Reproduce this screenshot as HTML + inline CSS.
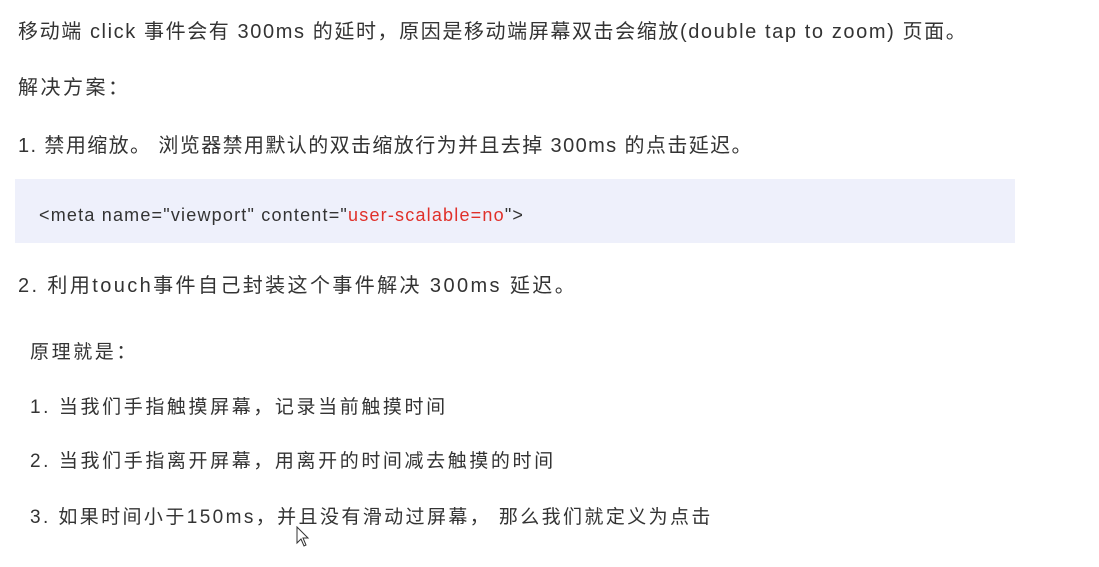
<!DOCTYPE html>
<html><head><meta charset="utf-8"><style>
html,body{margin:0;padding:0;background:#fff;width:1099px;height:567px;overflow:hidden}
body{font-family:"Liberation Sans","Noto Sans CJK SC",sans-serif;color:#333;}
.l{position:absolute;white-space:nowrap;font-size:20px;line-height:24px}
.s{font-size:19px;letter-spacing:2.6px}
.code{position:absolute;left:15px;top:179px;width:1000px;height:64px;background:#eef0fb}
.red{color:#e0302a}
</style></head><body>
<div class="l" style="left:18px;top:20px;letter-spacing:1.6px">移动端 click 事件会有 300ms 的延时，原因是移动端屏幕双击会缩放(double tap to zoom) 页面。</div>
<div class="l" style="left:18px;top:76px;letter-spacing:2.5px">解决方案：</div>
<div class="l" style="left:18px;top:134px;letter-spacing:1.4px">1. 禁用缩放。 浏览器禁用默认的双击缩放行为并且去掉 300ms 的点击延迟。</div>
<div class="code"></div>
<div class="l" style="left:39px;top:203px;font-size:18px;letter-spacing:1.2px">&lt;meta name="viewport" content="<span class="red">user-scalable=no</span>"&gt;</div>
<div class="l" style="left:18px;top:274px;letter-spacing:2.4px">2. 利用touch事件自己封装这个事件解决 300ms 延迟。</div>
<div class="l s" style="left:30px;top:341px">原理就是：</div>
<div class="l s" style="left:30px;top:396px">1. 当我们手指触摸屏幕，记录当前触摸时间</div>
<div class="l s" style="left:30px;top:450px">2. 当我们手指离开屏幕，用离开的时间减去触摸的时间</div>
<div class="l s" style="left:30px;top:506px;letter-spacing:2.4px">3. 如果时间小于150ms，并且没有滑动过屏幕， 那么我们就定义为点击</div>
<svg style="position:absolute;left:296px;top:526px" width="14" height="22" viewBox="0 0 14 22"><path d="M1 1 L1 17 L5 13 L8 20 L10 19 L7 12 L12 12 Z" fill="#fff" stroke="#333" stroke-width="1"/></svg>
</body></html>
